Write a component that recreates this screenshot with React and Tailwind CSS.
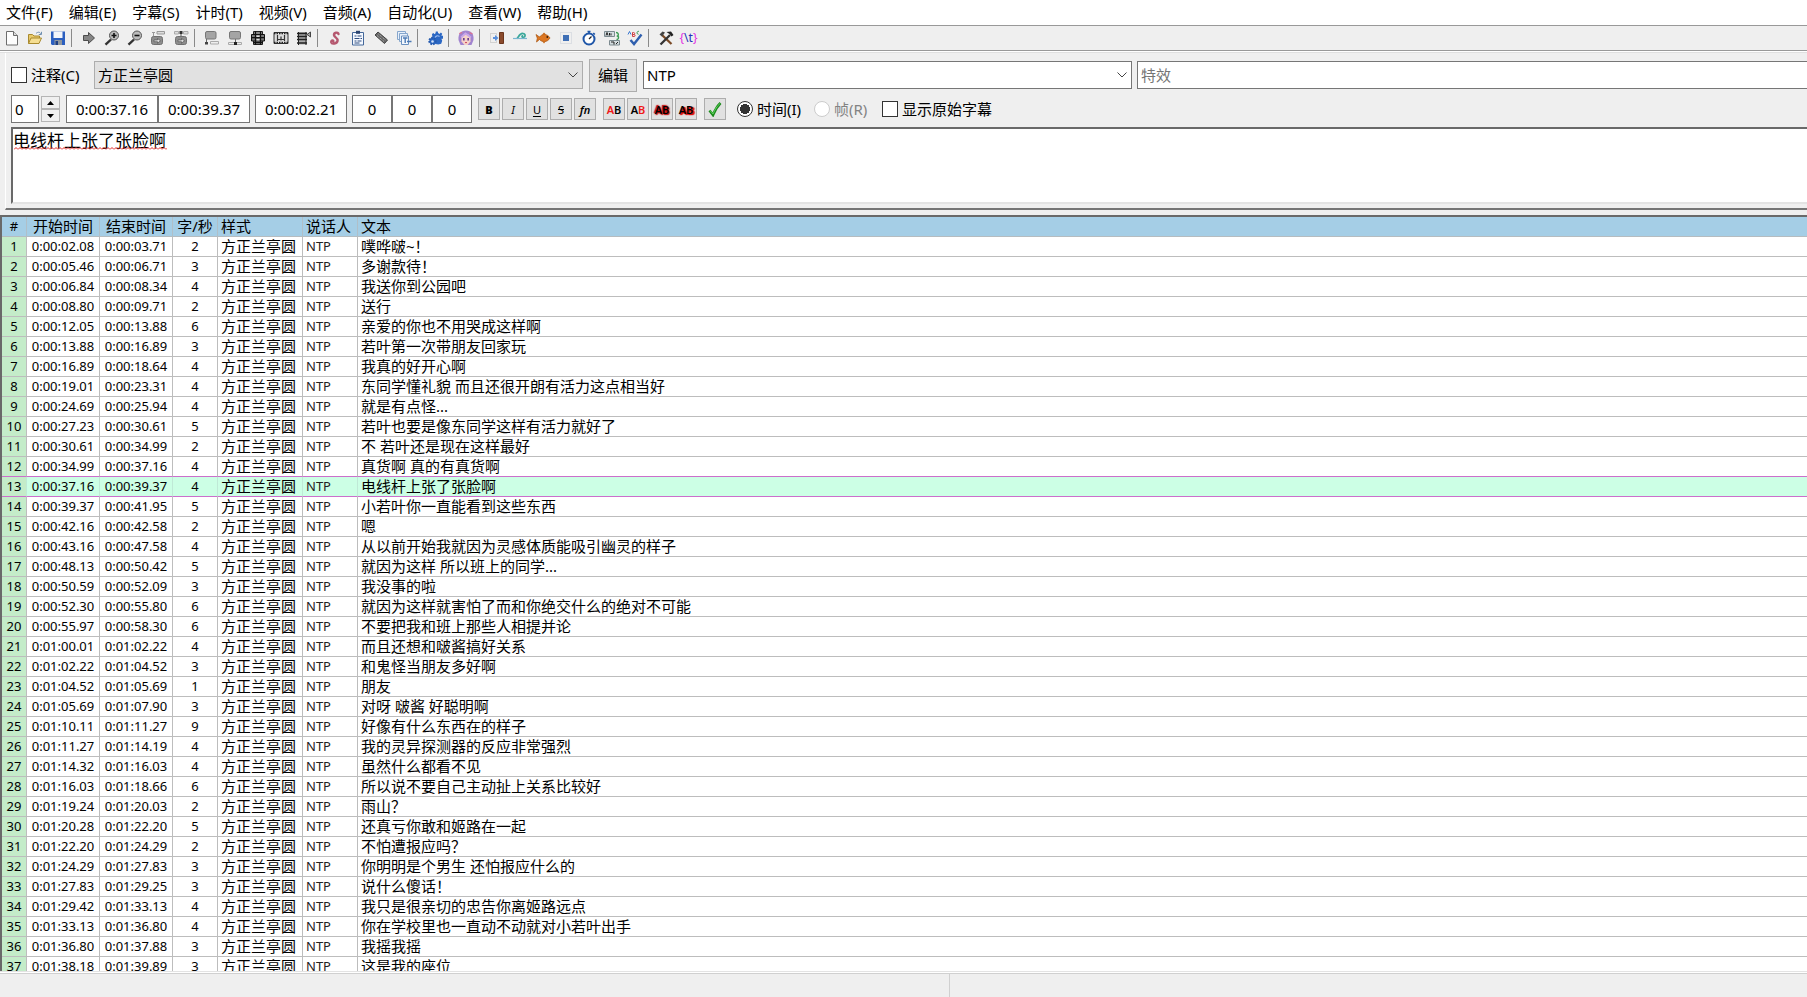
import React from "react";

const UI_FONT = "font-['Noto_Sans','Noto_Sans_CJK_SC',sans-serif]";

const MENUS = [
  "文件(F)", "编辑(E)", "字幕(S)", "计时(T)", "视频(V)",
  "音频(A)", "自动化(U)", "查看(W)", "帮助(H)",
];

const LINES = [
  ["0:00:02.08", "0:00:03.71", 2, "噗哗啵~！"],
  ["0:00:05.46", "0:00:06.71", 3, "多谢款待！"],
  ["0:00:06.84", "0:00:08.34", 4, "我送你到公园吧"],
  ["0:00:08.80", "0:00:09.71", 2, "送行"],
  ["0:00:12.05", "0:00:13.88", 6, "亲爱的你也不用哭成这样啊"],
  ["0:00:13.88", "0:00:16.89", 3, "若叶第一次带朋友回家玩"],
  ["0:00:16.89", "0:00:18.64", 4, "我真的好开心啊"],
  ["0:00:19.01", "0:00:23.31", 4, "东同学懂礼貌 而且还很开朗有活力这点相当好"],
  ["0:00:24.69", "0:00:25.94", 4, "就是有点怪..."],
  ["0:00:27.23", "0:00:30.61", 5, "若叶也要是像东同学这样有活力就好了"],
  ["0:00:30.61", "0:00:34.99", 2, "不 若叶还是现在这样最好"],
  ["0:00:34.99", "0:00:37.16", 4, "真货啊 真的有真货啊"],
  ["0:00:37.16", "0:00:39.37", 4, "电线杆上张了张脸啊"],
  ["0:00:39.37", "0:00:41.95", 5, "小若叶你一直能看到这些东西"],
  ["0:00:42.16", "0:00:42.58", 2, "嗯"],
  ["0:00:43.16", "0:00:47.58", 4, "从以前开始我就因为灵感体质能吸引幽灵的样子"],
  ["0:00:48.13", "0:00:50.42", 5, "就因为这样 所以班上的同学..."],
  ["0:00:50.59", "0:00:52.09", 3, "我没事的啦"],
  ["0:00:52.30", "0:00:55.80", 6, "就因为这样就害怕了而和你绝交什么的绝对不可能"],
  ["0:00:55.97", "0:00:58.30", 6, "不要把我和班上那些人相提并论"],
  ["0:01:00.01", "0:01:02.22", 4, "而且还想和啵酱搞好关系"],
  ["0:01:02.22", "0:01:04.52", 3, "和鬼怪当朋友多好啊"],
  ["0:01:04.52", "0:01:05.69", 1, "朋友"],
  ["0:01:05.69", "0:01:07.90", 3, "对呀 啵酱 好聪明啊"],
  ["0:01:10.11", "0:01:11.27", 9, "好像有什么东西在的样子"],
  ["0:01:11.27", "0:01:14.19", 4, "我的灵异探测器的反应非常强烈"],
  ["0:01:14.32", "0:01:16.03", 4, "虽然什么都看不见"],
  ["0:01:16.03", "0:01:18.66", 6, "所以说不要自己主动扯上关系比较好"],
  ["0:01:19.24", "0:01:20.03", 2, "雨山？"],
  ["0:01:20.28", "0:01:22.20", 5, "还真亏你敢和姬路在一起"],
  ["0:01:22.20", "0:01:24.29", 2, "不怕遭报应吗？"],
  ["0:01:24.29", "0:01:27.83", 3, "你明明是个男生 还怕报应什么的"],
  ["0:01:27.83", "0:01:29.25", 3, "说什么傻话！"],
  ["0:01:29.42", "0:01:33.13", 4, "我只是很亲切的忠告你离姬路远点"],
  ["0:01:33.13", "0:01:36.80", 4, "你在学校里也一直动不动就对小若叶出手"],
  ["0:01:36.80", "0:01:37.88", 3, "我摇我摇"],
  ["0:01:38.18", "0:01:39.89", 3, "这是我的座位"],
];
const ACTIVE_LINE = 13;

const ICONS = {
  new: (
    <>
      <path d="M2.5 1.5h7l4 4v9.500h-11z" fill="#fdfdfd" stroke="#6d6d6d" />
      <path d="M9.500 1.500v4h4" fill="#ddd" stroke="#6d6d6d" />
    </>
  ),
  open: (
    <>
      <path d="M1.500 13.500v-9h4l1.500 1.500h5.500v2" fill="#e8c96a" stroke="#a98a2e" />
      <path d="M1.500 13.500l2.500-5.500h10.500l-2.500 5.500z" fill="#f5de92" stroke="#a98a2e" />
      <path d="M9 3.500c2-2 4-1.500 5 .5M14.500 1.800v2.700h-2.700" fill="none" stroke="#6f8fb0" />
    </>
  ),
  save: (
    <>
      <path d="M1 1.500h14v13.500h-13l-1-1z" fill="#2b5fc0" />
      <path d="M3.500 1.500h9v6.500h-9z" fill="#f2f5fa" />
      <path d="M4.500 10h7.500v5h-7.500z" fill="#8f979f" />
      <path d="M5.500 11h2.500v4h-2.500z" fill="#1d3f84" />
    </>
  ),
  jump: <path d="M2.500 5.500h5v-3l6 5.500-6 5.500v-3h-5z" fill="#858585" stroke="#4c4c4c" />,
  zoomIn: (
    <>
      <path d="M7 9.500l-5.500 5.200" stroke="#333" strokeWidth="2.400" />
      <circle cx="10" cy="5.500" r="4.500" fill="#bbb" stroke="#555" />
      <path d="M7.500 5.500h5M10 3v5" stroke="#111" strokeWidth="1.600" />
    </>
  ),
  zoomOut: (
    <>
      <path d="M7 9.500l-5.500 5.200" stroke="#333" strokeWidth="2.400" />
      <circle cx="10" cy="5.500" r="4.500" fill="#bbb" stroke="#555" />
      <path d="M7.500 5.500h5" stroke="#111" strokeWidth="1.600" />
    </>
  ),
  videoStart: (
    <>
      <path d="M2 2.500h3M7 1.500h7.500v2.500h-7.500zM3.500 2.500v4" fill="#ddd" stroke="#999" />
      <rect x="1.500" y="6.500" width="11" height="8" rx="2" fill="#8d8d8d" stroke="#707070" />
      <path d="M4 10h3.500v-1.500l3 2.300-3 2.400v-1.500h-3.500z" fill="#ddd" stroke="#444" strokeWidth=".6" />
    </>
  ),
  videoEnd: (
    <>
      <path d="M1.500 1.500h4v2.500h-4zM10.500 1.500h4.500v2.500h-4.500z" fill="#ddd" stroke="#aaa" />
      <path d="M6.500 1h3v3h-3z" fill="#333" />
      <path d="M8 4v3" stroke="#555" />
      <rect x="2.500" y="6.500" width="11" height="8" rx="2" fill="#8d8d8d" stroke="#707070" />
      <path d="M5 10h3.500v-1.500l3 2.300-3 2.400v-1.500h-3.500z" fill="#ddd" stroke="#444" strokeWidth=".6" />
    </>
  ),
  snapStart: (
    <>
      <path d="M6.500 11.500h8v2.500h-8z" fill="#eee" stroke="#aaa" />
      <path d="M2.500 9v3" stroke="#666" />
      <path d="M1 12h3v2.500h-3z" fill="#444" />
      <rect x="1.500" y="1.500" width="10.500" height="7.500" rx="1.500" fill="#a4a4a4" stroke="#777" />
    </>
  ),
  snapEnd: (
    <>
      <path d="M1.500 12.500h13v2h-13z" fill="#eee" stroke="#aaa" />
      <path d="M8.500 9v3" stroke="#666" />
      <path d="M7 12h3v3h-3z" fill="#222" />
      <rect x="2.500" y="1.500" width="11" height="7.500" rx="1.500" fill="#a4a4a4" stroke="#777" />
    </>
  ),
  snapScene: (
    <>
      <path d="M3.500 1.500h9v13h-9z" fill="#888" stroke="#222" />
      <path d="M1.500 4.500h13v6.500h-13z" fill="#777" stroke="#111" />
      <path d="M1 7.700h14M5.500 1v14M10.500 1v14M3 12.700h10" stroke="#111" strokeWidth="1.200" />
      <path d="M6.500 5.500h3v1.500h-3zM6.500 9h3v1.500h-3z" fill="#ddd" />
    </>
  ),
  shiftScene: (
    <>
      <path d="M1 2.500h14v11h-14z" fill="#ddd" stroke="#333" />
      <path d="M1 3.500h14M1 12.500h14" stroke="#222" strokeWidth="1.600" strokeDasharray="1.500 1" />
      <path d="M4.500 5v6M8 6.500v4M11.500 5v6M5 9.500h6" stroke="#333" strokeWidth="1.200" />
    </>
  ),
  shiftFrame: (
    <>
      <path d="M2 2h8.500v12.500h-8.500z" fill="#aaa" />
      <path d="M1 3.500h10M1 6.500h10M1 9.500h10M1 13h10" stroke="#222" strokeWidth="1.500" />
      <path d="M2.500 2v13M10 2v13" stroke="#222" />
      <path d="M11 4.500l3.500-2.500v5z" fill="#aaa" stroke="#444" />
    </>
  ),
  styles: (
    <path
      d="M11.500 4c-.5-2.300-4.800-1.500-4.500 1.200.2 2.300 4 2.300 3.600 5.600-.5 3-5.800 3.700-6.400 1.500-.3-1.600 1.500-2.300 2.200-1.100"
      fill="none" stroke="#b5586f" strokeWidth="2.400" strokeLinecap="round"
    />
  ),
  properties: (
    <>
      <path d="M2.500 2.500h11v12.500h-11z" fill="#f4f8ff" stroke="#44689a" />
      <path d="M6 .800h4v3h-4z" fill="#2a4470" />
      <path d="M4.500 6h2M7.500 6h4M4.500 8.500h5M10.500 8.500h1.500M4.500 11h2M7.500 11h4M4.500 13h5" stroke="#2f4d7f" />
    </>
  ),
  attachments: (
    <>
      <path d="M2 5l3-3 9.500 8-3 3.500z" fill="#666" stroke="#444" strokeLinejoin="round" />
      <path d="M4 5.500l7 6M5.500 4l7 6" stroke="#bbb" strokeDasharray="1 1" />
    </>
  ),
  fonts: (
    <>
      <path d="M1.500 1.500h8v8h-8z" fill="#e7f0fb" stroke="#86a6cc" />
      <path d="M3.500 3.500h8v8h-8z" fill="#e7f0fb" stroke="#86a6cc" />
      <path d="M5.500 6h7v8.500h-7z" fill="#f4f8fd" stroke="#6a90bf" />
      <path d="M7 8h4.500M9.200 8v5M11 11.500h4.500" stroke="#4c7ab5" strokeWidth="1.400" />
    </>
  ),
  automation: (
    <>
      <path d="M5 4l1.500-1 1 1.200 1-.4.300-2.300h2l.4 2 1.200.500 1.500-1.500 1.300 1.300-.8 2h1.600v3h-1.600l.8 2-1 3-3 .7-5-1z" fill="#2c68c4" />
      <circle cx="10" cy="7.500" r="4.200" fill="#2c68c4" />
      <circle cx="5.500" cy="11" r="3.200" fill="#2c68c4" stroke="#2459ae" strokeWidth="2" strokeDasharray="1.600 1.100" />
      <path d="M8 7.500c1-2 3-2.200 4.500-1" stroke="#9cbcf0" strokeWidth="1.200" />
      <circle cx="5.500" cy="11.500" r="1.300" fill="#cfdff8" />
    </>
  ),
  assdraw: (
    <>
      <path d="M.500 10c-.5-6 2-9.500 7.500-9.500s8 3.500 7.500 9.500l-2 5h-11z" fill="#a184cf" />
      <path d="M3.500 7l2-2.500h5l2 2.500v4.500l-3 3.500h-3l-3-3.500z" fill="#f7d3c8" />
      <path d="M3 7.500l4.500-4 5.500 4" fill="none" stroke="#c9a6ea" strokeWidth="1.800" />
      <path d="M5.800 8v2.400M10.200 8v2.400" stroke="#6a3f92" strokeWidth="1.700" />
      <path d="M7 12.600h2" stroke="#c8415a" />
      <path d="M1.200 3.500l3-1M11.500 2.500l3 1.500" stroke="#e0708a" strokeWidth="1.200" />
    </>
  ),
  shift: (
    <>
      <path d="M1.500 3.500h6v9h-6z" fill="none" stroke="#b5b5b5" strokeDasharray="1 1" />
      <path d="M4 8h3" stroke="#5a90dd" strokeWidth="2" />
      <path d="M6 5l3.500 3-3.500 3z" fill="#5a90dd" />
      <path d="M10.500 2.500h4v11h-4z" fill="#8a4a2c" stroke="#6b351c" />
    </>
  ),
  timing: (
    <>
      <path d="M5 8.500c1.500-1 2.500-5.500 6-5 3 .5 2.500 3.800.2 3.800-1.700 0-1.500-1.800 0-1.800" fill="none" stroke="#3aa79a" strokeWidth="1.700" />
      <path d="M1 8.500h14" stroke="#79b6cf" strokeWidth="1.200" />
    </>
  ),
  kanji: (
    <>
      <path d="M1 4.500l3.500 2.500c2.500-3.500 8-3.500 10.500 1-2.500 4.500-8 4.500-10.500 1.500l-3 2.500.8-3.800z" fill="#dd7722" stroke="#a6520f" strokeWidth=".7" />
      <path d="M7 4.800l2-2.300 2 2M7.500 11.500l1.500 2 1.500-2" fill="#c9640f" />
      <circle cx="12.300" cy="7" r=".9" fill="#3a1c05" />
    </>
  ),
  resample: (
    <>
      <path d="M2.500 2.500h11v11h-11z" fill="none" stroke="#c6cdd6" strokeDasharray="1 1" />
      <path d="M5 5h6v6h-6z" fill="#3f6fb5" />
    </>
  ),
  clock: (
    <>
      <circle cx="8" cy="9" r="5.500" fill="#fff" stroke="#1f56a8" strokeWidth="2" />
      <path d="M6.500 1.500h3M8 1.500v2M12.300 3l1.500 1.500" stroke="#1f56a8" strokeWidth="1.700" />
      <path d="M8 9l2.500-2.500" stroke="#222" strokeWidth="1.300" />
    </>
  ),
  translate: (
    <>
      <path d="M.5 1.500h10v5h-10z" fill="#d5dde0" stroke="#7c8a90" />
      <path d="M2 5.500l1-3 1 3M5.500 3v2.500M7 5.500v-2.200" fill="none" stroke="#222" />
      <path d="M5.500 10.500h10v4.500h-10z" fill="#d5dde0" stroke="#7c8a90" />
      <path d="M7 12h3v2.500M12 14l2-2" fill="none" stroke="#222" />
      <path d="M12 2.500c2.500 0 3 2.500 1.500 3.500 2 1 1 3.500-1 3.500" fill="none" stroke="#3a9c54" strokeWidth="1.400" />
    </>
  ),
  spell: (
    <>
      <path d="M1 4.500l1.500-3 1.500 3" fill="none" stroke="#3a78d0" />
      <path d="M5.500 2.500v4h1.500c1.500 0 1.500-2 0-2h-1.500h1.200c1.300 0 1.300-2 0-2z" fill="none" stroke="#d04040" />
      <path d="M12 1.500c-2-1-3 2.500-.5 2.800" fill="none" stroke="#3a9c54" />
      <path d="M3.500 10l3.500 4 7.500-9.500" fill="none" stroke="#2f5fae" strokeWidth="2.400" />
    </>
  ),
  options: (
    <>
      <path d="M4 5l9.500 9" stroke="#7a4a26" strokeWidth="2.300" />
      <path d="M12 5l-9.500 9.500" stroke="#333" strokeWidth="2.300" />
      <path d="M1.500 4.500l3-3 2.500 1-3 4z" fill="#444" />
      <path d="M8.500 2l4.500-.5 2.500 3.500-2 1.500-2-2.500z" fill="#222" />
    </>
  ),
};

const TOOL_GROUPS = [
  [["new", "新建"], ["open", "打开"], ["save", "保存"]],
  [["jump", "跳转"], ["zoomIn", "放大"], ["zoomOut", "缩小"], ["videoStart", "跳到行首"], ["videoEnd", "跳到行尾"]],
  [["snapStart", "设为开始"], ["snapEnd", "设为结束"], ["snapScene", "对齐场景"], ["shiftScene", "选择可见行"], ["shiftFrame", "平移到帧"]],
  [["styles", "样式管理器"], ["properties", "脚本属性"], ["attachments", "附件"], ["fonts", "字体收集"]],
  [["automation", "自动化"]],
  [["assdraw", "绘图"]],
  [["shift", "平移时间"], ["timing", "计时后处理"], ["kanji", "汉字计时"], ["resample", "重设分辨率"], ["clock", "时间"], ["translate", "翻译助手"], ["spell", "拼写检查"]],
  [["options", "选项"], ["tags", "标签"]],
];

function ToolButton({ name, label }) {
  return (
    <button type="button" aria-label={label} className="flex h-6 w-[23px] items-center justify-center">
      {name === "tags" ? (
        <span className="text-xs leading-4 text-[#e22fe2]">
          {"{"}<span className="text-[#2430b8]">\t</span>{"}"}
        </span>
      ) : (
        <svg viewBox="0 0 16 16" className="size-4" fill="none">{ICONS[name]}</svg>
      )}
    </button>
  );
}

function Toolbar() {
  return (
    <div className="flex h-6 items-center">
      {TOOL_GROUPS.map((group, i) => (
        <React.Fragment key={i}>
          {i > 0 && <span className="mr-[5px] ml-[2px] h-[18px] w-px bg-[#8a8a8a]" />}
          {group.map(([name, label]) => <ToolButton key={name} name={name} label={label} />)}
        </React.Fragment>
      ))}
    </div>
  );
}

function Chevron() {
  return (
    <svg viewBox="0 0 10 6" className="pointer-events-none absolute top-[11px] right-[5px] h-[6px] w-[10px]">
      <path d="M.5 .5l4.500 4.500 4.500-4.500" fill="none" stroke="#444" />
    </svg>
  );
}

function Combo({ value, label, className }) {
  return (
    <div className="relative min-w-0 flex-[489]">
      <select aria-label={label} defaultValue={value} className={`block h-7 w-full appearance-none rounded-none border pr-5 pl-[3px] text-[15px] ${className}`}>
        <option>{value}</option>
      </select>
      <Chevron />
    </div>
  );
}

function TimeBox({ value, label, className = "" }) {
  return (
    <input
      aria-label={label}
      defaultValue={value}
      className={`h-7 border border-[#767676] bg-white text-center text-[15px] ${className}`}
    />
  );
}

function SmallButton({ label, className = "", children }) {
  return (
    <button
      type="button"
      aria-label={label}
      className={`flex size-[22px] items-center justify-center border border-[#adadad] bg-[#e1e1e1] text-[11px] leading-none ${className}`}
    >
      {children}
    </button>
  );
}

const RED_GLOW = "[text-shadow:0_0_2px_#d00000,1px_1px_1px_#c00000,-1px_-1px_1px_#c00000]";
const RED_SHADE = "[text-shadow:1px_1px_1px_#e00000,2px_1px_1px_#e00000]";

function EditPanel() {
  return (
    <section className="ml-[5px] border-b-2 border-b-[#757575] border-l border-l-white pl-[5px]">
      <div className="flex h-[39px] items-center pt-[5px]">
        <label className="flex w-[83px] items-center gap-1 text-[15px]">
          <input type="checkbox" className="size-4 appearance-none border border-[#333] bg-white" />
          注释(C)
        </label>
        <Combo label="样式" value="方正兰亭圆" className="border-[#adadad] bg-[#e1e1e1]" />
        <button type="button" className="mr-[6px] ml-[6px] h-[33px] w-12 border border-[#adadad] bg-[#e1e1e1] text-[15px]">编辑</button>
        <Combo label="说话人" value="NTP" className="border-[#767676] bg-white" />
        <input aria-label="特效" placeholder="特效" className="ml-[5px] h-7 min-w-0 flex-[663] border border-r-0 border-[#767676] bg-white px-[3px] text-[15px] placeholder:text-[#757575]" />
      </div>

      <div className="flex h-[34px] items-center">
        <input aria-label="层次" defaultValue="0" className="h-7 w-7 border border-[#767676] bg-white pl-[3px] text-[15px]" />
        <div className="mr-[6px] ml-[2px] flex flex-col">
          <button type="button" aria-label="增加" className="flex h-[13px] w-[19px] items-center justify-center border border-[#b5b5b5] bg-[#f0f0f0]">
            <svg viewBox="0 0 7 4" className="h-1 w-[7px]"><path d="M0 4l3.500-4 3.500 4z" /></svg>
          </button>
          <button type="button" aria-label="减少" className="flex h-[13px] w-[19px] items-center justify-center border border-[#b5b5b5] bg-[#f0f0f0]">
            <svg viewBox="0 0 7 4" className="h-1 w-[7px]"><path d="M0 0l3.500 4 3.500-4z" /></svg>
          </button>
        </div>
        <TimeBox label="开始时间" value="0:00:37.16" className="w-[92px]" />
        <TimeBox label="结束时间" value="0:00:39.37" className="w-[92px]" />
        <TimeBox label="持续时间" value="0:00:02.21" className="ml-[5px] w-[92px]" />
        <TimeBox label="左边距" value="0" className="ml-[5px] w-10" />
        <TimeBox label="右边距" value="0" className="w-10" />
        <TimeBox label="垂直边距" value="0" className="w-10" />
        <div className="ml-[6px] flex gap-[2px]">
          <SmallButton label="粗体" className="font-black">B</SmallButton>
          <SmallButton label="斜体" className="italic">I</SmallButton>
          <SmallButton label="下划线" className="underline underline-offset-2">U</SmallButton>
          <SmallButton label="删除线" className="line-through">S</SmallButton>
          <SmallButton label="字体" className="font-semibold italic">fn</SmallButton>
        </div>
        <div className="ml-[7px] flex gap-[2px] font-semibold">
          <SmallButton label="主要颜色"><span className="text-[#f01818]">A</span>B</SmallButton>
          <SmallButton label="次要颜色">A<span className="text-[#f01818]">B</span></SmallButton>
          <SmallButton label="边框颜色" className={RED_GLOW}>AB</SmallButton>
          <SmallButton label="阴影颜色" className={RED_SHADE}>AB</SmallButton>
        </div>
        <SmallButton label="提交" className="ml-[7px]">
          <svg viewBox="0 0 16 16" className="size-4"><path d="M2.500 9.500l3.500 4.500c2-5 4.500-9 7.500-12" fill="none" stroke="#1c8a1c" strokeWidth="2.600" /><path d="M3 9.500l3 3.500c2-4.500 4-8 7-10.500" fill="none" stroke="#5fd35f" /></svg>
        </SmallButton>
        <div className="ml-[11px] flex items-center text-[15px]">
          <label className="flex w-[77px] items-center gap-1">
            <input type="radio" name="unit" defaultChecked className="size-4 appearance-none rounded-full border border-[#333] bg-white bg-[radial-gradient(circle,#333_0_5px,#fff_5px)]" />
            时间(I)
          </label>
          <label className="flex w-[68px] items-center gap-1 text-[#838383]">
            <input type="radio" name="unit" disabled className="size-4 appearance-none rounded-full border border-[#ccc] bg-white" />
            帧(R)
          </label>
          <label className="flex items-center gap-1">
            <input type="checkbox" className="size-4 appearance-none border border-[#333] bg-white" />
            显示原始字幕
          </label>
        </div>
      </div>

      <div className="relative mt-px mb-1 h-[77px] border-t-2 border-b-2 border-l-2 border-t-[#696969] border-b-[#e3e3e3] border-l-[#696969] bg-white">
        <textarea aria-label="字幕文本" spellCheck={false} defaultValue="电线杆上张了张脸啊" className="block h-full w-full resize-none text-[17px] leading-[23px]" />
        <svg aria-hidden="true" className="pointer-events-none absolute top-[18px] left-px h-[3px] w-[153px]">
          <defs>
            <pattern id="wave" width="4" height="3" patternUnits="userSpaceOnUse">
              <path d="M0 2.500l2-2 2 2" fill="none" stroke="#e02020" />
            </pattern>
          </defs>
          <rect width="153" height="3" fill="url(#wave)" />
        </svg>
      </div>
    </section>
  );
}

const LATIN = "text-[13px]";
const CJK = "text-[15px]";

function SubtitleGrid() {
  const head = "h-5 border-r border-b border-r-[#b0bfc8] border-b-[#b5bcc0] p-0 font-normal leading-[19px]";
  return (
    <div className="mt-[5px] min-h-0 flex-1 overflow-hidden border-t-2 border-l-2 border-[#696969] bg-white">
      <table className="w-full table-fixed border-separate border-spacing-0 whitespace-nowrap">
        <colgroup>
          <col className="w-[25px]" />
          <col className="w-[73px]" />
          <col className="w-[73px]" />
          <col className="w-[45px]" />
          <col className="w-[85px]" />
          <col className="w-[55px]" />
          <col />
        </colgroup>
        <thead className="bg-[#a5cee6]">
          <tr>
            <th className={`${head} ${LATIN}`}>#</th>
            <th className={`${head} ${CJK}`}>开始时间</th>
            <th className={`${head} ${CJK}`}>结束时间</th>
            <th className={`${head} ${CJK}`}>字/秒</th>
            <th className={`${head} ${CJK} pl-[3px] text-left`}>样式</th>
            <th className={`${head} ${CJK} pl-[3px] text-left`}>说话人</th>
            <th className={`${head} ${CJK} border-r-0 pl-[3px] text-left`}>文本</th>
          </tr>
        </thead>
        <tbody>
          {LINES.map(([start, end, cps, text], i) => {
            const n = i + 1;
            const active = n === ACTIVE_LINE;
            const bottom = active || n === ACTIVE_LINE - 1 ? "border-b-[#cb6fcb]" : "border-b-[#bdbdbd]";
            const right = active ? "border-r-[#bfe9d6]" : "border-r-[#bdbdbd]";
            const cell = `h-5 border-r border-b p-0 leading-[19px] ${bottom} ${right}`;
            return (
              <tr key={n} className={active ? "bg-[#ccffe5]" : "bg-white"}>
                <td className={`${cell} ${LATIN} bg-[#c4ecc9] text-center`}>{n}</td>
                <td className={`${cell} ${LATIN} text-center`}>{start}</td>
                <td className={`${cell} ${LATIN} text-center`}>{end}</td>
                <td className={`${cell} ${LATIN} text-center`}>{cps}</td>
                <td className={`${cell} ${CJK} pl-[3px]`}>方正兰亭圆</td>
                <td className={`${cell} ${LATIN} pl-[3px] text-[#222]`}>NTP</td>
                <td className={`${cell} ${CJK} border-r-0 pl-[3px]`}>{text}</td>
              </tr>
            );
          })}
        </tbody>
      </table>
    </div>
  );
}

export default function App() {
  return (
    <div className={`flex h-screen flex-col overflow-hidden bg-[#efefef] text-black ${UI_FONT}`}>
      <nav className="flex h-[26px] items-start gap-4 border-b border-[#999] bg-white pl-[6px] text-[15px]">
        {MENUS.map((m) => <button key={m} type="button" className="leading-6 whitespace-nowrap">{m}</button>)}
      </nav>
      <Toolbar />
      <div className="h-[3px] border-t border-b border-t-[#999] border-b-[#e0e0e0] bg-white" />
      <EditPanel />
      <SubtitleGrid />
      <footer className="flex h-[26px] border-t border-[#e3e3e3] bg-white pt-px">
        <div className="flex-[950] border-t border-r border-[#d0d0d0] bg-[#efefef]" />
        <div className="flex-[857] border-t border-[#d0d0d0] bg-[#efefef]" />
      </footer>
    </div>
  );
}
